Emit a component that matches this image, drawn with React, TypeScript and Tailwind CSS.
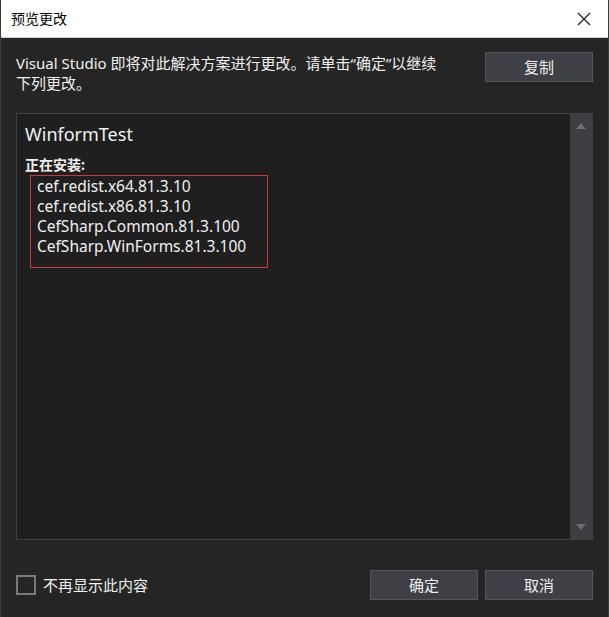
const font = "font-['Noto_Sans','Noto_Sans_CJK_SC',sans-serif]";

const packages = [
  "cef.redist.x64.81.3.10",
  "cef.redist.x86.81.3.10",
  "CefSharp.Common.81.3.100",
  "CefSharp.WinForms.81.3.100",
];

const DialogButton = ({ label }: { label: string }) => (
  <button className="w-[108px] h-[30px] bg-[#3f3f46] border border-[#55555c] text-[#f1f1f1] text-[15px] leading-none flex items-center justify-center">
    {label}
  </button>
);

export default function App() {
  return (
    <div className={`w-[609px] h-[617px] flex flex-col bg-[#252526] border-x border-[#3a3a3a] ${font}`}>
      {/* Title bar */}
      <div className="h-[38px] bg-white flex items-center justify-between pl-[10px] pr-[17px] border-b border-[#d0d0d0]">
        <span className="text-[14px] text-black">预览更改</span>
        <svg width="14" height="14" viewBox="0 0 14 14">
          <path d="M1 1 L13 13 M13 1 L1 13" stroke="#222" strokeWidth="1.3" />
        </svg>
      </div>

      <div className="flex-1 flex flex-col px-[15px]">
        {/* Message + copy */}
        <div className="flex justify-between items-start mt-[14px]">
          <p className="text-[15px] leading-[20px] text-[#f1f1f1] w-[432px] pt-px">
            Visual Studio 即将对此解决方案进行更改。请单击“确定”以继续下列更改。
          </p>
          <DialogButton label="复制" />
        </div>

        {/* Changes panel */}
        <div className="mt-[20px] h-[427px] flex border border-[#3f3f46] bg-[#1f1f1f]">
          <div className="flex-1 pl-[8px] pt-[8px] text-[#f1f1f1]">
            <div className="text-[18px] leading-[24px]">WinformTest</div>
            <div className="mt-[9px] text-[14px] leading-[20px] font-bold">正在安装:</div>
            <div className="ml-[5px] w-[238px] border border-[#d0343c] pl-[6px] pb-[11px]">
              {packages.map((p) => (
                <div key={p} className="text-[15.5px] leading-[20px]">
                  {p}
                </div>
              ))}
            </div>
          </div>
          <div className="w-[22px] bg-[#3e3e42] flex flex-col items-center justify-between py-[9px]">
            <svg width="10" height="6" viewBox="0 0 10 6">
              <path d="M0 6 L5 0 L10 6 Z" fill="#6e6e73" />
            </svg>
            <svg width="10" height="6" viewBox="0 0 10 6">
              <path d="M0 0 L5 6 L10 0 Z" fill="#6e6e73" />
            </svg>
          </div>
        </div>

        {/* Footer */}
        <div className="mt-[30px] flex items-center justify-between">
          <label className="flex items-center gap-[7px] text-[15px] text-[#f1f1f1]">
            <span className="w-[20px] h-[20px] border-2 border-[#7a7a7a] bg-[#252526]" />
            不再显示此内容
          </label>
          <div className="flex gap-[7px]">
            <DialogButton label="确定" />
            <DialogButton label="取消" />
          </div>
        </div>
      </div>
    </div>
  );
}
